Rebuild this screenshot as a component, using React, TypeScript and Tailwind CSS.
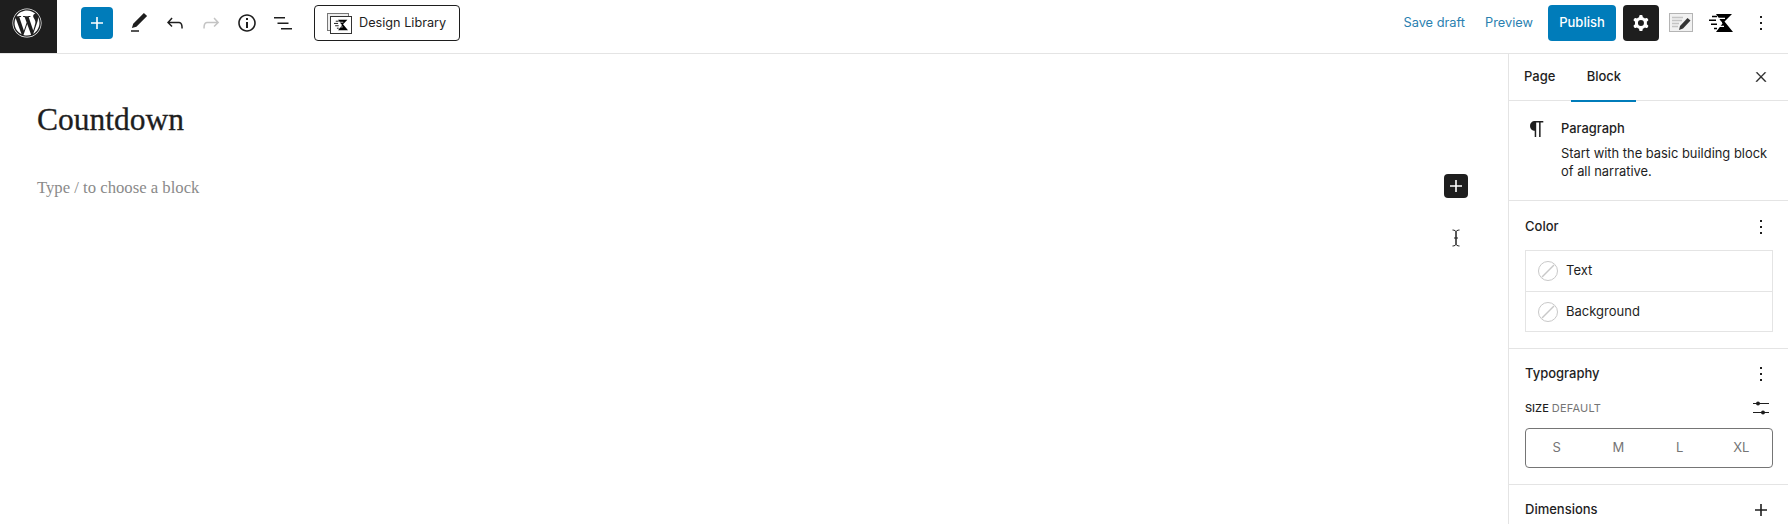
import { FaWordpress } from 'react-icons/fa';

const P = {
  plus: 'M18 11.2h-5.2V6h-1.6v5.2H6v1.6h5.2V18h1.6v-5.2H18z',
  pen: 'M20.1 5.1L16.9 2 6.2 12.7l-1.3 4.4 4.5-1.3L20.1 5.1zM4 20.8h8v-1.5H4v1.5z',
  undo: 'M18.3 11.7c-.6-.6-1.4-.9-2.3-.9H6.7l2.9-3.3-1.1-1-4.5 5L8.5 16l1-1-2.7-2.7H16c.5 0 .9.2 1.3.5 1 1 1 3.4 1 4.5v.3h1.5v-.2c0-1.5 0-4.3-1.5-5.7z',
  redo: 'M15.6 6.5l-1.1 1 2.9 3.3H8c-.9 0-1.7.3-2.3.9-1.4 1.5-1.4 4.2-1.4 5.6v.2h1.5v-.3c0-1.1 0-3.5 1-4.5.3-.3.7-.5 1.3-.5h9.2L14.5 15l1.1 1.1 4.6-4.6-4.6-5z',
  info: 'M12 3.2c-4.8 0-8.8 3.9-8.8 8.8 0 4.8 3.9 8.8 8.8 8.8 4.8 0 8.8-3.9 8.8-8.8 0-4.8-4-8.8-8.8-8.8zm0 16c-4 0-7.2-3.3-7.2-7.2C4.8 8 8 4.8 12 4.8s7.2 3.3 7.2 7.2c0 4-3.2 7.2-7.2 7.2zM11 17h2v-6h-2v6zm0-8h2V7h-2v2z',
  list: 'M3 6h11v1.5H3V6zm3.5 5.5h11V13h-11v-1.5zM21 17H10v1.5h11V17z',
  cog: 'M10.289 4.836A1 1 0 0111.275 4h1.306a1 1 0 01.987.836l.244 1.466c.787.26 1.503.679 2.108 1.218l1.393-.522a1 1 0 011.216.437l.653 1.13a1 1 0 01-.23 1.273l-1.148.944a6.025 6.025 0 010 2.435l1.149.946a1 1 0 01.23 1.272l-.653 1.13a1 1 0 01-1.216.437l-1.394-.522c-.605.54-1.32.958-2.108 1.218l-.244 1.466a1 1 0 01-.987.836h-1.306a1 1 0 01-.986-.836l-.244-1.466a5.995 5.995 0 01-2.108-1.218l-1.394.522a1 1 0 01-1.217-.436l-.653-1.131a1 1 0 01.23-1.272l1.149-.946a6.026 6.026 0 010-2.435l-1.148-.944a1 1 0 01-.23-1.272l.653-1.131a1 1 0 011.217-.437l1.393.522a5.994 5.994 0 012.108-1.218l.244-1.466zM14.929 12a3 3 0 11-6 0 3 3 0 016 0z',
  more: 'M13 19h-2v-2h2v2zm0-6h-2v-2h2v2zm0-6h-2V5h2v2z',
  close: 'M13 11.8l6.1-6.3-1-1-6.1 6.2-6.1-6.2-1 1 6.1 6.3-6.5 6.7 1 1 6.5-6.6 6.5 6.6 1-1z',
  para: 'M18.3 4H9.9v-.1l-.9.2c-2.3.4-4 2.4-4 4.8s1.7 4.4 4 4.8l.7.1V20h1.5V5.5h2.9V20h1.5V5.5h2.7V4z',
};

function Icon({ d, className = 'fill-[#1e1e1e]', size = 24 }: { d: string; className?: string; size?: number }) {
  return (
    <svg width={size} height={size} viewBox="0 0 24 24" className={className} fillRule="evenodd">
      <path d={d} />
    </svg>
  );
}

// speed-line K mark, white strips cut the left side into dashes
function KadenceMark() {
  return (
    <>
      <path d="M7 3h16l-7.500 7.500L24 21H7l6.500-8.500z" fill="#000" />
      <path d="M5 7.300h11M3 11.300h10M6 15.300h9" stroke="#fff" strokeWidth="1.200" />
      <path d="M3 5.500h5M0 9.300h7M2 13.300h6M5 17.500h3" stroke="#000" strokeWidth="1.500" />
    </>
  );
}

function Kadence() {
  return (
    <svg width="24" height="24" viewBox="0 0 24 24">
      <KadenceMark />
    </svg>
  );
}

function LibraryIcon() {
  return (
    <svg width="25" height="21" viewBox="0 0 25 21" className="shrink-0 fill-none">
      <rect x="0.500" y="0.500" width="21" height="17" fill="#eee" stroke="#777" />
      <rect x="3.500" y="3.500" width="21" height="17" fill="#fff" stroke="#333" />
      <svg x="7" y="5" width="14" height="14" viewBox="0 0 24 24">
        <KadenceMark />
      </svg>
    </svg>
  );
}

function NoColor() {
  return (
    <svg width="20" height="20" viewBox="0 0 20 20" className="shrink-0 fill-none stroke-[#c8c8c8]">
      <circle cx="10" cy="10" r="9.500" />
      <path d="M4 16L16 4" strokeWidth="1.500" />
    </svg>
  );
}

function Sliders() {
  return (
    <svg width="16" height="14" viewBox="0 0 16 14" className="fill-[#1e1e1e]">
      <rect y="2" width="16" height="1" />
      <rect y="11" width="16" height="1" />
      <circle cx="5" cy="2.500" r="2" />
      <circle cx="10" cy="11.500" r="2" />
    </svg>
  );
}

function PanelHead({ title, d = P.more }: { title: string; d?: string }) {
  return (
    <div className="flex h-6 items-center justify-between">
      <span className="text-[13px] font-medium text-[#1e1e1e]">{title}</span>
      <Icon d={d} />
    </div>
  );
}

function ColorRow({ label, last }: { label: string; last?: boolean }) {
  return (
    <div className={last ? 'flex h-[39px] items-center gap-2 px-3' : 'flex h-[41px] items-center gap-2 border-b border-[#e4e4e4] px-3'}>
      <NoColor />
      <span className="text-[13px] text-[#1e1e1e]">{label}</span>
    </div>
  );
}

export default function App() {
  return (
    <div className="flex h-[524px] w-[1788px] flex-col overflow-hidden bg-white font-['Inter',sans-serif] text-[#1e1e1e]">
      <header className="flex h-[54px] shrink-0 items-center border-b border-[#e4e4e4] pb-[7px]">
        <div className="-mb-[7px] flex h-[53px] w-[57px] shrink-0 items-center justify-center self-start bg-[#1e1e1e] pb-[7px] pr-[3px] text-white">
          <FaWordpress size={30} />
        </div>
        <div className="ml-6 flex h-8 w-8 items-center justify-center rounded-sm bg-[#007cba]">
          <Icon d={P.plus} className="fill-white" />
        </div>
        <div className="ml-[14px] flex items-center gap-3">
          <Icon d={P.pen} />
          <Icon d={P.undo} />
          <Icon d={P.redo} className="fill-[#c4c4c4]" />
          <Icon d={P.info} />
          <Icon d={P.list} />
        </div>
        <div className="ml-[19px] flex h-9 w-[146px] items-center gap-[7px] rounded-sm border border-[#1e1e1e] pl-3">
          <LibraryIcon />
          <span className="text-[12.7px]">Design Library</span>
        </div>
        <div className="ml-auto flex items-center">
          <span className="text-[12.8px] text-[#2a7fb0]">Save draft</span>
          <span className="ml-5 text-[12.8px] text-[#2a7fb0]">Preview</span>
          <div className="ml-[15px] flex h-9 w-[68px] items-center justify-center rounded-sm bg-[#007cba] text-[13px] font-medium text-white">
            Publish
          </div>
          <div className="ml-[7px] flex h-9 w-9 items-center justify-center rounded-sm bg-[#1e1e1e]">
            <Icon d={P.cog} className="fill-white" />
          </div>
          <svg width="24" height="20" viewBox="0 0 24 20" className="ml-[10px] fill-none">
            <rect x="0.500" y="0.500" width="23" height="18" fill="#f1f1f1" stroke="#b4b4b4" />
            <path d="M3 4.500h11M3 7.500h10M3 10.500h7M3 13.500h6" stroke="#c4c4c4" strokeWidth="1.500" />
            <path d="M11 13l7.500-8 3 2.500-7.500 8-4 1.500z" fill="#333" />
          </svg>
          <span className="ml-[16px]">
            <Kadence />
          </span>
          <span className="ml-4 mr-[15px]">
            <Icon d={P.more} />
          </span>
        </div>
      </header>

      <div className="flex min-h-0 flex-1">
        <main className="relative min-w-0 flex-1 pl-[37px] pr-10 font-['Liberation_Serif',serif]">
          <h1 className="mt-[46px] text-[31.5px] leading-[40px] text-[#1e1e1e] [-webkit-text-stroke:0.3px_#1e1e1e]">Countdown</h1>
          <div className="mt-[34px] flex h-6 items-center justify-between">
            <p className="pt-1 text-[16.7px] text-[#8a8a8a]">Type / to choose a block</p>
            <div className="flex h-6 w-6 items-center justify-center rounded-sm bg-[#1e1e1e]">
              <Icon d={P.plus} className="fill-white" />
            </div>
          </div>
          <svg width="10" height="18" viewBox="0 0 10 18" className="absolute left-[1451px] top-[175px] fill-none stroke-[#222]">
            <path d="M1.500 1c2 0 3.500 1 3.500 2v12c0 1-1.500 2-3.500 2M8.500 1c-2 0-3.500 1-3.500 2v12c0 1 1.500 2 3.500 2M3 9h4" />
          </svg>
        </main>

        <aside className="w-[280px] shrink-0 border-l border-[#e4e4e4]">
          <div className="flex h-[47px] items-center border-b border-[#e4e4e4] pr-[19px]">
            <span className="pl-[15px] pr-4 text-[13px] font-medium">Page</span>
            <span className="relative flex h-[47px] w-[65px] items-center justify-center text-[13px] font-medium">
              Block
              <span className="absolute inset-x-0 -bottom-px h-[2px] bg-[#007cba]" />
            </span>
            <span className="ml-auto">
              <svg width="16" height="16" viewBox="0 0 24 24" className="fill-[#1e1e1e] stroke-[#1e1e1e] stroke-[0.6]">
                <path d={P.close} />
              </svg>
            </span>
          </div>

          <div className="flex h-[100px] border-b border-[#e4e4e4] pl-4 pt-[19px]">
            <Icon d={P.para} className="-mt-[3px] fill-[#1e1e1e]" />
            <div className="ml-[12px] w-[220px] text-[12.9px] leading-[18px]">
              <div className="font-medium">Paragraph</div>
              <div className="mt-[7px]">Start with the basic building block of all narrative.</div>
            </div>
          </div>

          <div className="h-[148px] border-b border-[#e4e4e4] pl-4 pr-[15px] pt-[14px]">
            <PanelHead title="Color" />
            <div className="mt-[11px] w-[248px] border border-[#e4e4e4]">
              <ColorRow label="Text" />
              <ColorRow label="Background" last />
            </div>
          </div>

          <div className="h-[136px] border-b border-[#e4e4e4] pl-4 pr-[15px] pt-[13px]">
            <PanelHead title="Typography" />
            <div className="mt-[10px] flex h-6 items-center justify-between">
              <span className="text-[11px] font-medium">
                SIZE <span className="font-normal tracking-[0.02em] text-[#757575]">DEFAULT</span>
              </span>
              <span className="mr-[4px]">
                <Sliders />
              </span>
            </div>
            <div className="mt-2 grid h-10 w-[248px] grid-cols-4 items-center rounded-sm border border-[#757575] text-center text-[13px] text-[#757575]">
              <span>S</span>
              <span>M</span>
              <span>L</span>
              <span>XL</span>
            </div>
          </div>

          <div className="pl-4 pr-[15px] pt-[13px]">
            <PanelHead title="Dimensions" d={P.plus} />
          </div>
        </aside>
      </div>
    </div>
  );
}
